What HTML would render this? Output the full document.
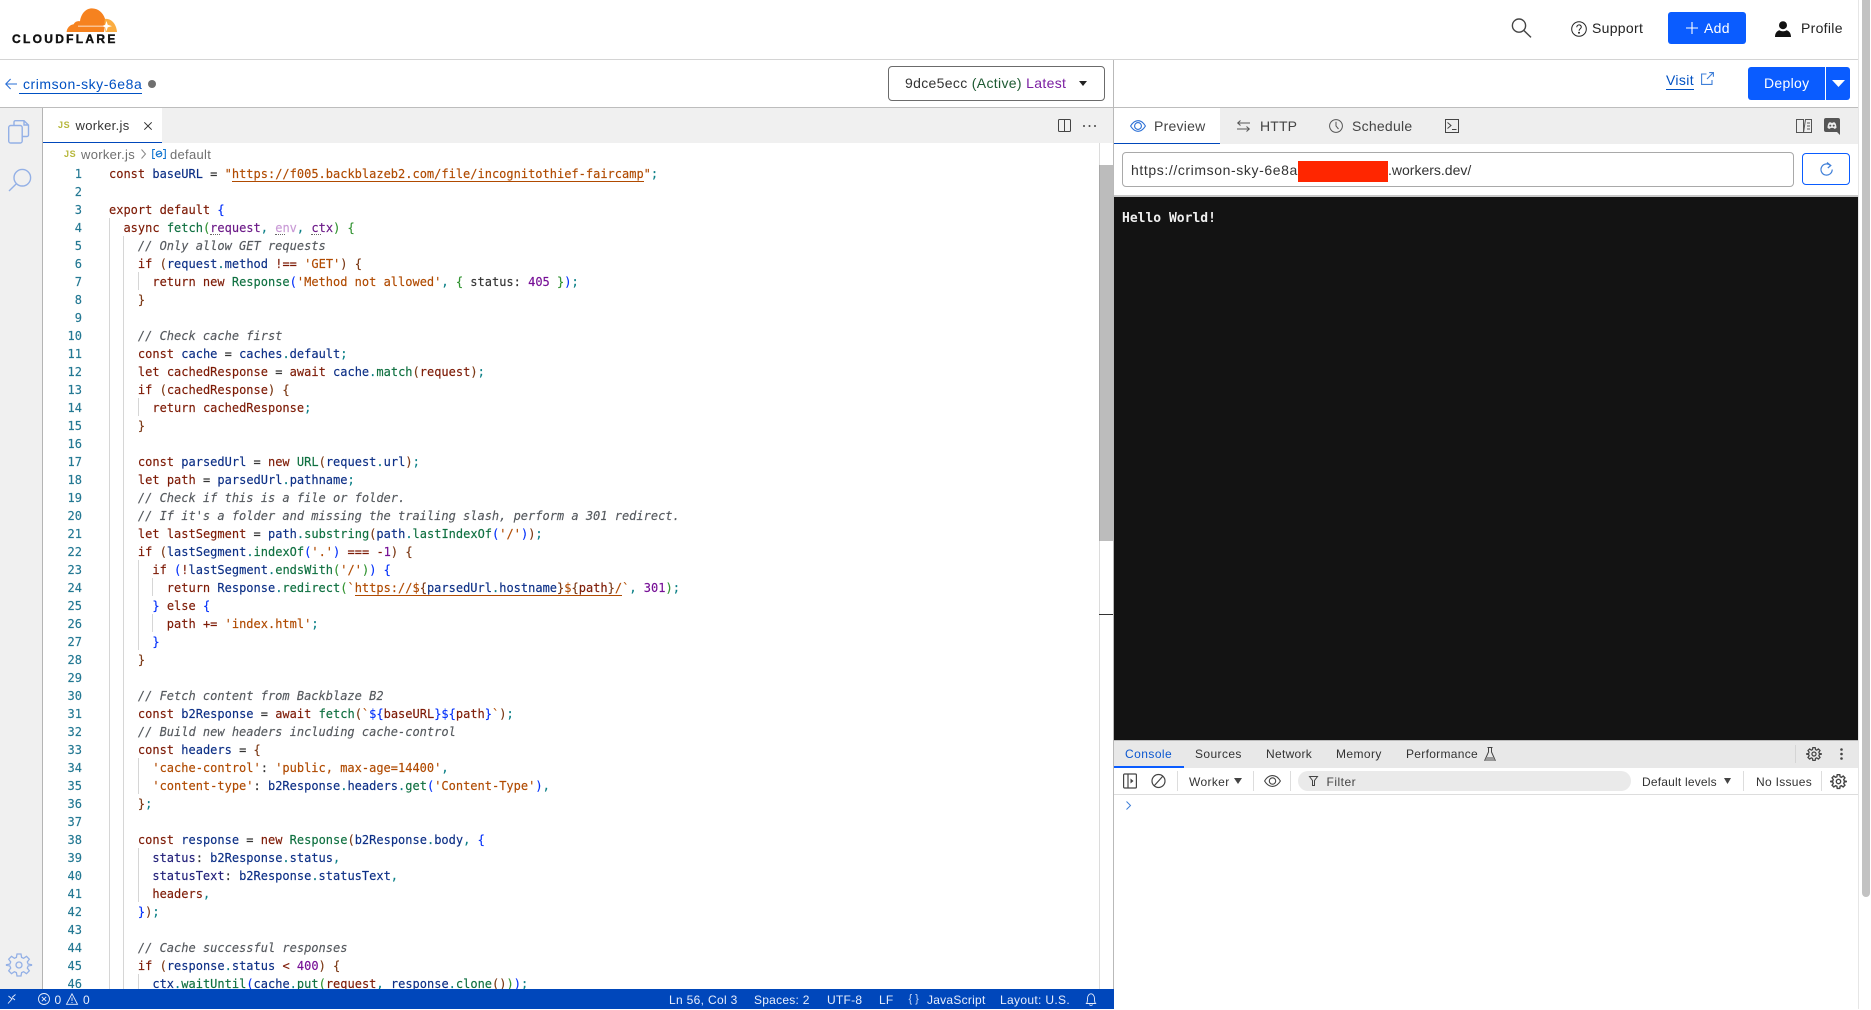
<!DOCTYPE html>
<html><head><meta charset="utf-8"><style>
*{box-sizing:border-box}
html,body{margin:0;padding:0;width:1871px;height:1009px;overflow:hidden;background:#fff;font-family:"Liberation Sans",sans-serif;color:#222}
.a{position:absolute}
.t{position:absolute;white-space:nowrap;line-height:20px;font-size:14px;letter-spacing:.3px}
svg{position:absolute;overflow:visible}
#code{position:absolute;left:0;top:0;width:1114px;height:989px;overflow:hidden}
#lines{position:absolute;left:109px;top:164.5px;font:12px/18px "DejaVu Sans Mono",monospace;color:#333;-webkit-text-stroke:.15px}
.l{height:18px;position:relative;white-space:pre}
.l i{position:absolute;left:-60px;width:33px;text-align:right;color:#237893;font-style:normal}
.k{color:#7d1a05}.v{color:#0c2f86}.f{color:#0f7040}.s{color:#b04a00}.c{color:#55595e;font-style:italic}
.n{color:#760f96}.e{color:#0a7f86}.B{color:#0431fa}.G{color:#319331}.R{color:#7b3814}.d{color:#7d1a05}.u{border-bottom:1px solid #b04a00}.o{color:#333}
.g{position:absolute;width:1px;background:#d6d6d6}
.dv{position:absolute;width:1px;background:#ddd;top:771px;height:20px}
.s12{font-size:12px;letter-spacing:.25px}
.st{color:#e8eefc;font-size:12px;letter-spacing:.25px}
.dot{position:absolute;top:234px;width:10px;height:1px;border-bottom:1px dotted #666}
</style></head><body>

<!-- header -->
<svg style="left:66px;top:8px" width="51" height="25" viewBox="0 0 51 25">
<path fill="#f6821f" d="M.6 24C1 20 3.600 17 7.600 16.300 9 13.600 11.500 12.600 14 13.300 15 5.500 20 .4 26 .4c6 0 11 4.200 13 10.400.4 1.500.6 2.500.6 3.600L38 24z"/>
<path fill="#fbad41" d="M38.800 11c6-.8 11.400 4.300 12.200 13H39.500L38.500 15z"/>
<path fill="#fff" d="M12 17.700h25v.8H12zM40.500 13l1.200 3.800 4.300 1.300-4.300 1.300-1.200 4-1.300-4-3.200-1.300 3.200-1.300z"/>
</svg>
<div class="t" style="left:12px;top:29px;font-size:12px;font-weight:bold;letter-spacing:2.300px;color:#111;-webkit-text-stroke:.4px #111">CLOUDFLARE</div>
<div class="a" style="left:0;top:59px;width:1862px;height:1px;background:#d4d4d4"></div>

<svg style="left:1511px;top:18px" width="21" height="20" viewBox="0 0 21 20" fill="none" stroke="#444" stroke-width="1.4"><circle cx="8" cy="7.6" r="6.6"/><path d="M12.8 12.4l7.2 7"/></svg>
<svg style="left:1571px;top:21px" width="16" height="16" viewBox="0 0 16 16" fill="none" stroke="#222" stroke-width="1"><circle cx="8" cy="8" r="7.3"/><path d="M5.8 6.2c0-3 4.5-3 4.5-.2 0 1.800-2.200 1.800-2.200 3.700"/><circle cx="8" cy="11.7" r=".5" fill="#222"/></svg>
<div class="t" style="left:1592px;top:18px;color:#222">Support</div>
<div class="a" style="left:1668px;top:12px;width:78px;height:32px;background:#0a5cff;border-radius:3px"></div>
<svg style="left:1686px;top:22px" width="12" height="12" viewBox="0 0 12 12" stroke="#fff" stroke-width="1.1"><path d="M6 0v12M0 6h12"/></svg>
<div class="t" style="left:1704px;top:18px;color:#fff">Add</div>
<svg style="left:1775px;top:21px" width="16" height="16" viewBox="0 0 16 16" fill="#111"><circle cx="8" cy="4.2" r="4"/><path d="M0 16c0-4.600 2.600-6.400 4.500-6.800 1.800 1.400 5.200 1.400 7 0 1.900.4 4.500 2.200 4.500 6.800z"/></svg>
<div class="t" style="left:1801px;top:18px;color:#222">Profile</div>

<!-- second bar -->
<svg style="left:5px;top:78px" width="12" height="12" viewBox="0 0 12 12" fill="none" stroke="#2a6fd6" stroke-width="1.1"><path d="M12 6H.8M5.600 1L.8 6l4.800 5"/></svg>
<div class="t" style="left:23px;top:74px;color:#0051c3;letter-spacing:.55px">crimson-sky-6e8a</div>
<div class="a" style="left:19px;top:92.5px;width:122.5px;height:1px;background:#0051c3"></div>
<div class="a" style="left:148px;top:80px;width:8px;height:8px;border-radius:50%;background:#6f6f6f"></div>
<div class="a" style="left:888px;top:66px;width:217px;height:35px;border:1px solid #6b6b6b;border-radius:4px"></div>
<div class="t" style="left:905px;top:73px;color:#333;letter-spacing:.33px">9dce5ecc <span style="color:#1d5a32">(Active)</span> <span style="color:#7b1fa2">Latest</span></div>
<svg style="left:1079px;top:81px" width="8" height="5" viewBox="0 0 8 5"><path d="M0 0h8L4 5z" fill="#222"/></svg>

<div class="t" style="left:1666px;top:70px;color:#0051c3;letter-spacing:.35px">Visit</div>
<div class="a" style="left:1666px;top:88.5px;width:28px;height:1px;background:#0051c3"></div>
<svg style="left:1701px;top:72px" width="13" height="13" viewBox="0 0 13 13" fill="none" stroke="#3f7fd8" stroke-width="1.1"><path d="M5.500 2H.6v10.400H11V8M6 7l6.200-6.400M8.200.6h4.200v4.200"/></svg>
<div class="a" style="left:1748px;top:67px;width:102px;height:33px;background:#0a5cff;border-radius:3px"></div>
<div class="a" style="left:1825px;top:67px;width:1px;height:33px;background:#fff"></div>
<div class="t" style="left:1764px;top:73px;color:#fff">Deploy</div>
<svg style="left:1832px;top:80px" width="13" height="7" viewBox="0 0 13 7"><path d="M0 0h13L6.500 7z" fill="#fff"/></svg>

<!-- borders -->
<div class="a" style="left:0;top:107px;width:1858px;height:1px;background:#bdbdbd"></div>
<div class="a" style="left:1113px;top:60px;width:1px;height:949px;background:#b9b9b9"></div>

<!-- activity bar -->
<div class="a" style="left:0;top:108px;width:42px;height:881px;background:#f0f0f0"></div>
<div class="a" style="left:42px;top:108px;width:1px;height:881px;background:#b4b4b4"></div>
<svg style="left:8px;top:120px" width="21" height="24" viewBox="0 0 21 24" fill="none" stroke="#93b0e6" stroke-width="1.4"><path d="M6 5.500V2A1.500 1.500 0 0 1 7.500.7H16L20.500 5v10a1.500 1.500 0 0 1-1.500 1.500h-5M16 .7V5h4.500"/><rect x=".7" y="5.500" width="13.500" height="17.500" rx="2"/></svg>
<svg style="left:8px;top:168px" width="23" height="24" viewBox="0 0 23 24" fill="none" stroke="#93b0e6" stroke-width="1.4"><circle cx="14.300" cy="9.700" r="8.300"/><path d="M8.600 15.500L1 23"/></svg>
<svg style="left:7px;top:953px" width="24" height="24" viewBox="0 0 24 24" fill="none" stroke="#93b0e6" stroke-width="1.3"><circle cx="12" cy="12" r="3"/><path d="M10 1h4l.6 3.400 2 .9 2.900-2 2.800 2.900-2 2.800.9 2.100 3.300.6v.6l-3.300.6-.9 2.100 2 2.800-2.800 2.900-2.900-2-2 .9L14 23h-4l-.6-3.400-2-.9-2.900 2L1.700 17.800l2-2.800-.9-2.100L-.5 12.300v-.6l3.300-.6.9-2.100-2-2.800L4.500 3.300l2.900 2 2-.9z"/></svg>

<!-- editor tabs -->
<div class="a" style="left:43px;top:108px;width:1070px;height:35px;background:#f0f0f0"></div>
<div class="a" style="left:43px;top:108px;width:119px;height:35px;background:#fff;border-bottom:1px solid #0047bb"></div>
<div class="t" style="left:58px;top:115px;font-size:9px;font-weight:bold;color:#b7b73b;letter-spacing:.6px">JS</div>
<div class="t" style="left:75.500px;top:116px;font-size:13px;letter-spacing:.3px;color:#333">worker.js</div>
<svg style="left:144px;top:122px" width="8" height="8" viewBox="0 0 8 8" stroke="#333" stroke-width="1"><path d="M.3.3l7.400 7.400M7.700.3L.3 7.700"/></svg>
<svg style="left:1058px;top:119px" width="13" height="13" viewBox="0 0 13 13" fill="none" stroke="#444" stroke-width="1"><rect x=".5" y=".5" width="12" height="12" rx="1"/><path d="M6.500.5v12"/></svg>
<svg style="left:1083px;top:125px" width="13" height="2" viewBox="0 0 13 2" fill="#444"><circle cx="1" cy="1" r="1"/><circle cx="6.500" cy="1" r="1"/><circle cx="12" cy="1" r="1"/></svg>

<!-- breadcrumb -->
<div class="t" style="left:64px;top:144px;font-size:9px;font-weight:bold;color:#b7b73b;letter-spacing:.6px">JS</div>
<div class="t" style="left:81px;top:145px;font-size:13px;letter-spacing:.3px;color:#707070">worker.js</div>
<svg style="left:141px;top:149px" width="5" height="10" viewBox="0 0 5 10" fill="none" stroke="#888"><path d="M.5.5L4.500 5 .5 9.500"/></svg>
<svg style="left:152px;top:149px" width="14" height="10" viewBox="0 0 14 10" fill="none" stroke="#0f74d0" stroke-width="1.1"><path d="M3 .5H.7v9H3M11 .5h2.300v9H11"/><circle cx="7" cy="5" r="2.800"/><path d="M4.500 5.800L9.500 4"/></svg>
<div class="t" style="left:170px;top:145px;font-size:13px;letter-spacing:.3px;color:#707070">default</div>

<!-- code -->
<div id="code">
<div class="g" style="left:109px;top:218px;height:771px"></div>
<div class="g" style="left:123px;top:236px;height:753px"></div>
<div class="g" style="left:138px;top:272px;height:18px"></div>
<div class="g" style="left:138px;top:398px;height:18px"></div>
<div class="g" style="left:138px;top:560px;height:90px"></div>
<div class="g" style="left:152px;top:578px;height:18px"></div>
<div class="g" style="left:152px;top:614px;height:18px"></div>
<div class="g" style="left:138px;top:758px;height:36px"></div>
<div class="g" style="left:138px;top:848px;height:54px"></div>
<div class="g" style="left:138px;top:974px;height:15px"></div>
<div class="dot" style="left:210px"></div>
<div class="dot" style="left:275px"></div>
<div class="dot" style="left:311px"></div>
<div id="lines">
<div class="l"><i>1</i><span class="k">const</span> <span class="v">baseURL</span> = <span class="s">"<span class="u">https://f005.backblazeb2.com/file/incognitothief-faircamp</span>"</span><span class="e">;</span></div>
<div class="l"><i>2</i></div>
<div class="l"><i>3</i><span class="k">export default</span> <span class="B">{</span></div>
<div class="l"><i>4</i>  <span class="k">async</span> <span class="f">fetch</span><span class="G">(</span><span style="color:#6c1a88">request</span><span class="e">,</span> <span style="color:#c99ad6">env</span><span class="e">,</span> <span style="color:#6c1a88">ctx</span><span class="G">) {</span></div>
<div class="l"><i>5</i>    <span class="c">// Only allow GET requests</span></div>
<div class="l"><i>6</i>    <span class="k">if</span> <span class="R">(</span><span class="v">request</span><span class="e">.</span><span class="v">method</span> <span class="d">!==</span> <span class="s">'GET'</span><span class="R">) {</span></div>
<div class="l"><i>7</i>      <span class="k">return new</span> <span class="f">Response</span><span class="B">(</span><span class="s">'Method not allowed'</span><span class="e">,</span> <span class="G">{</span> status: <span class="n">405</span> <span class="G">}</span><span class="B">)</span><span class="e">;</span></div>
<div class="l"><i>8</i>    <span class="R">}</span></div>
<div class="l"><i>9</i></div>
<div class="l"><i>10</i>    <span class="c">// Check cache first</span></div>
<div class="l"><i>11</i>    <span class="k">const</span> <span class="v">cache</span> = <span class="v">caches</span><span class="e">.</span><span class="v">default</span><span class="e">;</span></div>
<div class="l"><i>12</i>    <span class="k">let</span> <span class="d">cachedResponse</span> = <span class="k">await</span> <span class="v">cache</span><span class="e">.</span><span class="f">match</span><span class="R">(</span><span class="d">request</span><span class="R">)</span><span class="e">;</span></div>
<div class="l"><i>13</i>    <span class="k">if</span> <span class="R">(</span><span class="d">cachedResponse</span><span class="R">) {</span></div>
<div class="l"><i>14</i>      <span class="k">return</span> <span class="d">cachedResponse</span><span class="e">;</span></div>
<div class="l"><i>15</i>    <span class="R">}</span></div>
<div class="l"><i>16</i></div>
<div class="l"><i>17</i>    <span class="k">const</span> <span class="v">parsedUrl</span> = <span class="k">new</span> <span class="f">URL</span><span class="R">(</span><span class="v">request</span><span class="e">.</span><span class="v">url</span><span class="R">)</span><span class="e">;</span></div>
<div class="l"><i>18</i>    <span class="k">let</span> <span class="d">path</span> = <span class="v">parsedUrl</span><span class="e">.</span><span class="v">pathname</span><span class="e">;</span></div>
<div class="l"><i>19</i>    <span class="c">// Check if this is a file or folder.</span></div>
<div class="l"><i>20</i>    <span class="c">// If it's a folder and missing the trailing slash, perform a 301 redirect.</span></div>
<div class="l"><i>21</i>    <span class="k">let</span> <span class="d">lastSegment</span> = <span class="v">path</span><span class="e">.</span><span class="f">substring</span><span class="R">(</span><span class="v">path</span><span class="e">.</span><span class="f">lastIndexOf</span><span class="B">(</span><span class="s">'/'</span><span class="B">)</span><span class="R">)</span><span class="e">;</span></div>
<div class="l"><i>22</i>    <span class="k">if</span> <span class="R">(</span><span class="v">lastSegment</span><span class="e">.</span><span class="f">indexOf</span><span class="B">(</span><span class="s">'.'</span><span class="B">)</span> <span class="d">===</span> <span class="d">-</span><span class="n">1</span><span class="R">) {</span></div>
<div class="l"><i>23</i>      <span class="k">if</span> <span class="B">(</span><span class="d">!</span><span class="v">lastSegment</span><span class="e">.</span><span class="f">endsWith</span><span class="G">(</span><span class="s">'/'</span><span class="G">)</span><span class="B">) {</span></div>
<div class="l"><i>24</i>        <span class="k">return</span> <span class="v">Response</span><span class="e">.</span><span class="f">redirect</span><span class="G">(</span><span class="s">`</span><span class="u"><span class="s">https://$</span><span class="R">{</span><span class="v">parsedUrl</span><span class="e">.</span><span class="v">hostname</span><span class="R">}</span><span class="s">$</span><span class="R">{</span><span class="d">path</span><span class="R">}</span><span class="s">/</span></span><span class="s">`</span><span class="e">,</span> <span class="n">301</span><span class="G">)</span><span class="e">;</span></div>
<div class="l"><i>25</i>      <span class="B">}</span> <span class="k">else</span> <span class="B">{</span></div>
<div class="l"><i>26</i>        <span class="d">path</span> <span class="d">+=</span> <span class="s">'index.html'</span><span class="e">;</span></div>
<div class="l"><i>27</i>      <span class="B">}</span></div>
<div class="l"><i>28</i>    <span class="R">}</span></div>
<div class="l"><i>29</i></div>
<div class="l"><i>30</i>    <span class="c">// Fetch content from Backblaze B2</span></div>
<div class="l"><i>31</i>    <span class="k">const</span> <span class="v">b2Response</span> = <span class="k">await</span> <span class="f">fetch</span><span class="R">(</span><span class="s">`</span><span class="B">${</span><span class="d">baseURL</span><span class="B">}${</span><span class="d">path</span><span class="B">}</span><span class="s">`</span><span class="R">)</span><span class="e">;</span></div>
<div class="l"><i>32</i>    <span class="c">// Build new headers including cache-control</span></div>
<div class="l"><i>33</i>    <span class="k">const</span> <span class="v">headers</span> = <span class="R">{</span></div>
<div class="l"><i>34</i>      <span class="s">'cache-control'</span>: <span class="s">'public, max-age=14400'</span><span class="e">,</span></div>
<div class="l"><i>35</i>      <span class="s">'content-type'</span>: <span class="v">b2Response</span><span class="e">.</span><span class="v">headers</span><span class="e">.</span><span class="f">get</span><span class="B">(</span><span class="s">'Content-Type'</span><span class="B">)</span><span class="e">,</span></div>
<div class="l"><i>36</i>    <span class="R">}</span><span class="e">;</span></div>
<div class="l"><i>37</i></div>
<div class="l"><i>38</i>    <span class="k">const</span> <span class="v">response</span> = <span class="k">new</span> <span class="f">Response</span><span class="R">(</span><span class="v">b2Response</span><span class="e">.</span><span class="v">body</span><span class="e">,</span> <span class="B">{</span></div>
<div class="l"><i>39</i>      <span style="color:#22207a">status</span>: <span class="v">b2Response</span><span class="e">.</span><span class="v">status</span><span class="e">,</span></div>
<div class="l"><i>40</i>      <span style="color:#22207a">statusText</span>: <span class="v">b2Response</span><span class="e">.</span><span class="v">statusText</span><span class="e">,</span></div>
<div class="l"><i>41</i>      <span class="d">headers</span><span class="e">,</span></div>
<div class="l"><i>42</i>    <span class="B">}</span><span class="R">)</span><span class="e">;</span></div>
<div class="l"><i>43</i></div>
<div class="l"><i>44</i>    <span class="c">// Cache successful responses</span></div>
<div class="l"><i>45</i>    <span class="k">if</span> <span class="R">(</span><span class="v">response</span><span class="e">.</span><span class="v">status</span> <span class="d">&lt;</span> <span class="n">400</span><span class="R">) {</span></div>
<div class="l"><i>46</i>      <span class="v">ctx</span><span class="e">.</span><span class="f">waitUntil</span><span class="B">(</span><span class="v">cache</span><span class="e">.</span><span class="f">put</span><span class="G">(</span><span class="d">request</span><span class="e">,</span> <span class="v">response</span><span class="e">.</span><span class="f">clone</span><span class="R">()</span><span class="G">)</span><span class="B">)</span><span class="e">;</span></div>
</div>
</div>
<!-- editor scrollbar -->
<div class="a" style="left:1099px;top:143px;width:1px;height:846px;background:#dcdcdc"></div>
<div class="a" style="left:1099px;top:165px;width:14px;height:376px;background:#bcbcbc;border-left:1px solid #a9a9a9"></div>
<div class="a" style="left:1099px;top:614px;width:14px;height:1px;background:#333"></div>

<!-- status bar -->
<div class="a" style="left:0;top:989px;width:1114px;height:20px;background:#0047bb"></div>
<svg style="left:8px;top:994px" width="8" height="10" viewBox="0 0 8 10" fill="none" stroke="#e8eefc" stroke-width=".9"><path d="M0 9.500L4 5 .5 2M4 3.500L7.500.5M4.500 4L7 6"/></svg>
<svg style="left:38px;top:993px" width="12" height="12" viewBox="0 0 12 12" fill="none" stroke="#e8eefc" stroke-width=".9"><circle cx="6" cy="6" r="5.500"/><path d="M3.800 3.800l4.400 4.400M8.200 3.800l-4.400 4.400"/></svg>
<div class="t st" style="left:54.500px;top:990px">0</div>
<svg style="left:66px;top:993px" width="12" height="12" viewBox="0 0 12 12" fill="none" stroke="#e8eefc" stroke-width=".9"><path d="M6 .8L11.500 11.300H.5zM6 4.500v3.500M6 9v1"/></svg>
<div class="t st" style="left:83px;top:990px">0</div>
<div class="t st" style="left:669px;top:990px;letter-spacing:.33px">Ln 56, Col 3</div>
<div class="t st" style="left:754px;top:990px">Spaces: 2</div>
<div class="t st" style="left:827px;top:990px">UTF-8</div>
<div class="t st" style="left:879px;top:990px">LF</div>
<div class="t st" style="left:908.500px;top:989px;font-size:11px;letter-spacing:3px;color:#c6d6f5">{}</div>
<div class="t st" style="left:927px;top:990px">JavaScript</div>
<div class="t st" style="left:1000px;top:990px;letter-spacing:.33px">Layout: U.S.</div>
<svg style="left:1086px;top:993px" width="10" height="13" viewBox="0 0 10 13" fill="none" stroke="#e8eefc" stroke-width=".9"><path d="M.5 10.500c1-1 1-2.500 1-5C1.500 3 3 .8 5 .8s3.500 2.200 3.500 4.700c0 2.500 0 4 1 5zM3.500 11.500c.5 1.300 2.500 1.300 3 0"/></svg>

<!-- right tabs -->
<div class="a" style="left:1114px;top:108px;width:744px;height:36px;background:#eee"></div>
<div class="a" style="left:1114px;top:108px;width:106px;height:36px;background:#fff;border-bottom:1px solid #0047bb"></div>
<svg style="left:1130px;top:120px" width="16" height="12" viewBox="0 0 16 12" fill="none" stroke="#2a6fd6" stroke-width="1.1"><path d="M.6 6C3 2 5.500.7 8 .7S13 2 15.400 6C13 10 10.500 11.300 8 11.300S3 10 .6 6z"/><circle cx="8" cy="6" r="3.400"/></svg>
<div class="t" style="left:1154px;top:116px;color:#444;letter-spacing:.25px">Preview</div>
<svg style="left:1237px;top:120px" width="13" height="12" viewBox="0 0 13 12" fill="none" stroke="#555" stroke-width="1"><path d="M3.500.5L.7 3l2.800 2.500M.7 3H13M9.500 6.500L12.300 9l-2.800 2.500M12.300 9H0"/></svg>
<div class="t" style="left:1260px;top:116px;color:#444;letter-spacing:.15px">HTTP</div>
<svg style="left:1329px;top:119px" width="14" height="14" viewBox="0 0 14 14" fill="none" stroke="#555" stroke-width="1"><circle cx="7" cy="7" r="6.400"/><path d="M7 2.800V7l2.500 3"/></svg>
<div class="t" style="left:1352px;top:116px;color:#444;letter-spacing:.25px">Schedule</div>
<svg style="left:1445px;top:119px" width="14" height="14" viewBox="0 0 14 14" fill="none" stroke="#444" stroke-width="1"><rect x=".5" y=".5" width="13" height="13"/><path d="M2.500 3.500L6 6.500l-3.500 3M7 10.500h4.500"/></svg>
<svg style="left:1796px;top:119px" width="16" height="14" viewBox="0 0 16 14" fill="none" stroke="#555" stroke-width="1"><path d="M.5.500H7.500V13.500H.5zM7.500 13.500L9.500.5h6V13.500zM11 4h3M11 7h3M11 10h3"/></svg>
<svg style="left:1824px;top:118px" width="16" height="17" viewBox="0 0 16 17"><path fill="#555" d="M2 0h12a2 2 0 0 1 2 2v15l-3-3H2a2 2 0 0 1-2-2V2a2 2 0 0 1 2-2z"/><path fill="#eee" d="M3.500 9.700C3.700 6.500 4.500 5 5.400 4.400l1.300-.2.300.6h2l.3-.6 1.300.2c.9.600 1.700 2.100 1.900 5.300-.7.800-1.700 1.100-2.400 1.100l-.6-.9H6.600l-.6.900c-.8 0-1.800-.3-2.500-1.100z"/><circle cx="6.300" cy="7.600" r="1" fill="#555"/><circle cx="9.700" cy="7.600" r="1" fill="#555"/></svg>

<!-- url bar -->
<div class="a" style="left:1122px;top:152px;width:672px;height:35px;border:1px solid #a9a9a9;border-radius:4px"></div>
<div class="t" style="left:1131px;top:160px;color:#333;letter-spacing:.6px">https://crimson-sky-6e8a</div>
<div class="a" style="left:1298px;top:161px;width:90px;height:21px;background:#ff2600"></div>
<div class="t" style="left:1388px;top:160px;color:#333;letter-spacing:0">.workers.dev/</div>
<div class="a" style="left:1802px;top:153px;width:48px;height:32px;border:1px solid #0a5cff;border-radius:4px"></div>
<svg style="left:1820px;top:162px" width="13" height="14" viewBox="0 0 13 14" fill="none" stroke="#3f7fd8" stroke-width="1.2"><path d="M10.500 3.500A5.600 5.600 0 1 0 12.200 7.500"/><path d="M7 .5l3.800 3L7.800 6"/></svg>
<div class="a" style="left:1114px;top:195px;width:744px;height:2px;background:#c8c8c8"></div>

<!-- preview -->
<div class="a" style="left:1114px;top:197px;width:744px;height:543px;background:#131313"></div>
<div class="t" style="left:1122px;top:209px;font:bold 13px/20px 'DejaVu Sans Mono',monospace;letter-spacing:0;color:#f0f0f0">Hello World!</div>

<!-- devtools -->
<div class="a" style="left:1114px;top:740px;width:744px;height:1px;background:#bbb"></div>
<div class="a" style="left:1114px;top:741px;width:744px;height:27px;background:#e8e8e8"></div>
<div class="a" style="left:1114px;top:766px;width:70px;height:2px;background:#0a5cff"></div>
<div class="t s12" style="left:1125px;top:744px;color:#0b57d0;letter-spacing:.45px">Console</div>
<div class="t s12" style="left:1195px;top:744px;color:#333;letter-spacing:.4px">Sources</div>
<div class="t s12" style="left:1266px;top:744px;color:#333;letter-spacing:.3px">Network</div>
<div class="t s12" style="left:1336px;top:744px;color:#333;letter-spacing:.4px">Memory</div>
<div class="t s12" style="left:1406px;top:744px;color:#333;letter-spacing:.3px">Performance</div>
<svg style="left:1484px;top:747px" width="12" height="14" viewBox="0 0 12 14" fill="none" stroke="#444" stroke-width="1"><path d="M3.500.5h5M4.500.5V5L.8 13.300h10.400L7.500 5V.5"/><path d="M2.500 10h7L11 13.500H1z" fill="#999" stroke="none"/></svg>
<div class="a" style="left:1795px;top:745px;width:1px;height:18px;background:#d5d5d5"></div>
<svg style="left:1807px;top:747px" width="14" height="14" viewBox="0 0 24 24" fill="none" stroke="#444" stroke-width="2.200"><circle cx="12" cy="12" r="3.500"/><path d="M10 1h4l.6 3.400 2 .9 2.900-2 2.800 2.900-2 2.800.9 2.100 3.300.6v.6l-3.300.6-.9 2.100 2 2.800-2.800 2.900-2.900-2-2 .9L14 23h-4l-.6-3.400-2-.9-2.900 2L1.700 17.800l2-2.800-.9-2.100L-.5 12.300v-.6l3.300-.6.9-2.100-2-2.800L4.500 3.300l2.900 2 2-.9z"/></svg>
<svg style="left:1840px;top:748px" width="3" height="12" viewBox="0 0 3 12" fill="#444"><circle cx="1.500" cy="1.500" r="1.300"/><circle cx="1.500" cy="6" r="1.300"/><circle cx="1.500" cy="10.500" r="1.300"/></svg>

<svg style="left:1123px;top:773px" width="14" height="16" viewBox="0 0 14 16" fill="none" stroke="#444" stroke-width="1.200"><rect x=".6" y="1" width="12.800" height="14" rx="1"/><path d="M5 1v14"/><path d="M7.500 5.500l3 2.500-3 2.500z" fill="#444" stroke="none"/></svg>
<svg style="left:1151px;top:773px" width="15" height="16" viewBox="0 0 15 16" fill="none" stroke="#444" stroke-width="1.200"><circle cx="7.500" cy="8" r="6.500"/><path d="M3 13L12 3"/></svg>
<div class="dv" style="left:1177px"></div>
<div class="t s12" style="left:1189px;top:772px;color:#333;letter-spacing:.35px">Worker</div>
<svg style="left:1234px;top:778px" width="8" height="6" viewBox="0 0 8 6"><path d="M0 0h8L4 6z" fill="#444"/></svg>
<div class="dv" style="left:1253px"></div>
<svg style="left:1264px;top:775px" width="17" height="12" viewBox="0 0 17 12" fill="none" stroke="#444" stroke-width="1.100"><path d="M.6 6C3 2 6 .6 8.500.6S14 2 16.400 6C14 10 11 11.400 8.500 11.400S3 10 .6 6z"/><circle cx="8.500" cy="6" r="3.200"/></svg>
<div class="dv" style="left:1290px"></div>
<div class="a" style="left:1298px;top:771px;width:333px;height:20px;background:#eaeaea;border-radius:10px"></div>
<svg style="left:1309px;top:776px" width="9" height="10" viewBox="0 0 9 10" fill="none" stroke="#444" stroke-width="1"><path d="M.5.5h8L5.500 4.500V9.500H3.500V4.500z"/></svg>
<div class="t s12" style="left:1326.500px;top:772px;color:#444;letter-spacing:.5px">Filter</div>
<div class="t s12" style="left:1642px;top:772px;color:#333;letter-spacing:.2px">Default levels</div>
<svg style="left:1724px;top:778px" width="7" height="6" viewBox="0 0 7 6"><path d="M0 0h7L3.500 6z" fill="#444"/></svg>
<div class="dv" style="left:1743px"></div>
<div class="t s12" style="left:1756px;top:772px;color:#333;letter-spacing:.3px">No Issues</div>
<div class="dv" style="left:1821px"></div>
<svg style="left:1831px;top:774px" width="15" height="15" viewBox="0 0 24 24" fill="none" stroke="#444" stroke-width="2.200"><circle cx="12" cy="12" r="3.500"/><path d="M10 1h4l.6 3.400 2 .9 2.900-2 2.800 2.900-2 2.800.9 2.100 3.300.6v.6l-3.300.6-.9 2.100 2 2.800-2.800 2.900-2.900-2-2 .9L14 23h-4l-.6-3.400-2-.9-2.900 2L1.700 17.800l2-2.800-.9-2.100L-.5 12.300v-.6l3.300-.6.9-2.100-2-2.800L4.500 3.300l2.900 2 2-.9z"/></svg>
<div class="a" style="left:1114px;top:794px;width:744px;height:1px;background:#ddd"></div>
<svg style="left:1126px;top:801px" width="5" height="9" viewBox="0 0 5 9" fill="none" stroke="#3f7fd8" stroke-width="1"><path d="M.5.500L4.500 4.500 .5 8.500"/></svg>

<!-- page scrollbar -->
<div class="a" style="left:1858px;top:0;width:13px;height:1009px;background:#fff"></div>
<div class="a" style="left:1858px;top:0;width:1px;height:1009px;background:#e6e6e6"></div>
<div class="a" style="left:1862px;top:0;width:8px;height:897px;background:#c2c2c2;border-radius:0 0 4px 4px"></div>
</body></html>
